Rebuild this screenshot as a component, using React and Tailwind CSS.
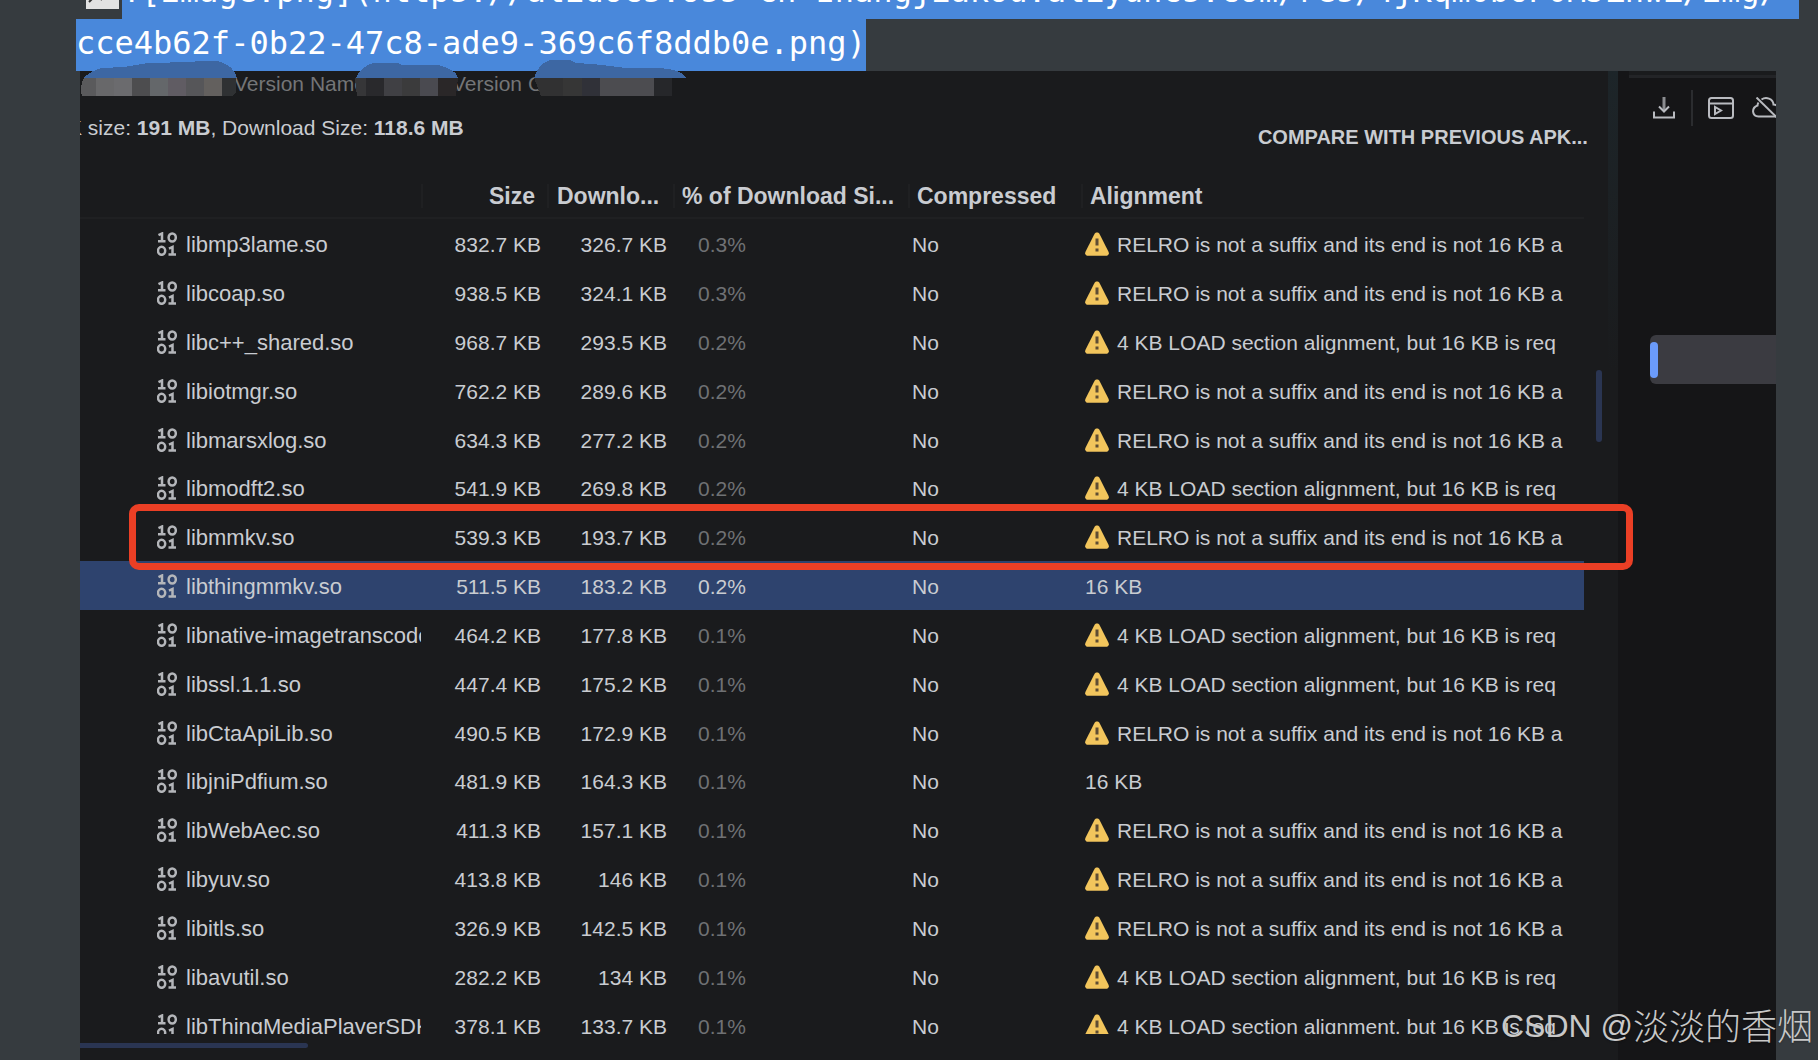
import React from 'react';

const RELRO = 'RELRO is not a suffix and its end is not 16 KB a';
const LOAD = '4 KB LOAD section alignment, but 16 KB is req';

const libs = [
    { name: 'libmp3lame.so', size: '832.7 KB', download: '326.7 KB', percent: '0.3%', warning: RELRO },
    { name: 'libcoap.so', size: '938.5 KB', download: '324.1 KB', percent: '0.3%', warning: RELRO },
    { name: 'libc++_shared.so', size: '968.7 KB', download: '293.5 KB', percent: '0.2%', warning: LOAD },
    { name: 'libiotmgr.so', size: '762.2 KB', download: '289.6 KB', percent: '0.2%', warning: RELRO },
    { name: 'libmarsxlog.so', size: '634.3 KB', download: '277.2 KB', percent: '0.2%', warning: RELRO },
    { name: 'libmodft2.so', size: '541.9 KB', download: '269.8 KB', percent: '0.2%', warning: LOAD },
    { name: 'libmmkv.so', size: '539.3 KB', download: '193.7 KB', percent: '0.2%', warning: RELRO },
    { name: 'libthingmmkv.so', size: '511.5 KB', download: '183.2 KB', percent: '0.2%', selected: true },
    { name: 'libnative-imagetranscode', size: '464.2 KB', download: '177.8 KB', percent: '0.1%', warning: LOAD },
    { name: 'libssl.1.1.so', size: '447.4 KB', download: '175.2 KB', percent: '0.1%', warning: LOAD },
    { name: 'libCtaApiLib.so', size: '490.5 KB', download: '172.9 KB', percent: '0.1%', warning: RELRO },
    { name: 'libjniPdfium.so', size: '481.9 KB', download: '164.3 KB', percent: '0.1%' },
    { name: 'libWebAec.so', size: '411.3 KB', download: '157.1 KB', percent: '0.1%', warning: RELRO },
    { name: 'libyuv.so', size: '413.8 KB', download: '146 KB', percent: '0.1%', warning: RELRO },
    { name: 'libitls.so', size: '326.9 KB', download: '142.5 KB', percent: '0.1%', warning: RELRO },
    { name: 'libavutil.so', size: '282.2 KB', download: '134 KB', percent: '0.1%', warning: LOAD },
    { name: 'libThingMediaPlayerSDK', size: '378.1 KB', download: '133.7 KB', percent: '0.1%', warning: LOAD },
];

const BinaryIcon = () => (
    <svg viewBox="0 0 20 24" className="w-5 h-6 mb-[2px] shrink-0" fill="none" stroke="#b4b6ba" strokeWidth="2.500">
        <path d="M1.500 3.200 5 1.500V10M1 9.300H8.500" />
        <ellipse cx="15.200" cy="5.500" rx="3.600" ry="4" />
        <ellipse cx="4.600" cy="18.800" rx="3.600" ry="4" />
        <path d="M12 16.700 15.500 15V23.500M11.500 22.600H19" />
    </svg>
);

const WarningIcon = () => (
    <svg viewBox="0 0 24 24" className="w-6 h-6 mb-[2px] shrink-0">
        <path d="M9.600 1.800C10.600 -0.100 13.400 -0.100 14.400 1.800L23.500 19.800C24.500 21.900 23.200 23.800 21 23.800H3C0.800 23.800 -0.500 21.900 0.500 19.800Z" fill="#f2c55c" />
        <path d="M10.500 6.500H13.500V13.500H10.500ZM10.500 16.500H13.500V19.500H10.500Z" fill="#5e4d33" />
    </svg>
);

const DownloadIcon = () => (
    <svg viewBox="0 0 22 22" className="w-[22px] h-[22px]" fill="none" stroke="#b9bbc0" strokeWidth="2">
        <path d="M11 0V14" stroke="#8b8c90" strokeWidth="3" />
        <path d="M6 9.500 11 14.500 16 9.500" />
        <path d="M1 14.500V20.500H21V14.500" />
    </svg>
);

const RunWindowIcon = () => (
    <svg viewBox="0 0 26 22" className="w-[26px] h-[22px]" fill="none" stroke="#b9bbc0" strokeWidth="2">
        <rect x="1" y="1" width="24" height="20" rx="2.500" />
        <path d="M1 6.500H25" />
        <path d="M7 10V17L13 13.500Z" />
    </svg>
);

const CloudOffIcon = () => (
    <svg viewBox="0 0 30 22" className="w-[30px] h-[22px]" fill="none" stroke="#b9bbc0" strokeWidth="2">
        <path d="M4.500 0.500 25 20.500" />
        <path d="M6.500 5.500C5.500 7 5.500 8 5.500 8.500C-1 11 0 19.500 6.500 19.500H24" />
        <path d="M9.500 2.500C14 -0.500 21 1.500 21.500 7.500C25 8 28.500 10.500 28 15" />
    </svg>
);

// pixelated smears hiding the package name and version values
const Smears = () => (
    <svg viewBox="0 0 610 40" className="absolute left-0 -top-[11px] w-[610px] h-10" shapeRendering="crispEdges">
        <g fill="#3d67a3">
            <path d="M4 18C8 13 14 10 22 8L44 7 68 3 112 2 118 1H138C148 4 156 10 157 18Z" />
            <path d="M276 18C279 10 287 4 294 3H318L322 5H358C370 8 377 12 378 18Z" />
            <path d="M454 18C456 9 464 0 474 -1H488L496 3 512 4 530 6 546 8H580C594 9 602 12 607 18Z" />
        </g>
        <path fill="#5a5a5c" d="M4 18H16V36H2C0 30 1 23 4 18Z" />
        <path fill="#68686a" d="M16 18H34V36H16Z" />
        <path fill="#6b6b6e" d="M34 18H52V36H34Z" />
        <path fill="#4d4d4f" d="M52 18H70V36H52Z" />
        <path fill="#64676a" d="M70 18H88V36H70Z" />
        <path fill="#605c63" d="M88 18H106V36H88Z" />
        <path fill="#565659" d="M106 18H124V36H106Z" />
        <path fill="#63605e" d="M124 18H142V36H124Z" />
        <path fill="#2f3133" d="M142 18H156V32L152 36H142Z" />
        <path fill="#363638" d="M275 18H286V36H277Z" />
        <path fill="#29292c" d="M286 18H304V36H286Z" />
        <path fill="#404044" d="M304 18H322V36H304Z" />
        <path fill="#3b3b3c" d="M322 18H340V36H322Z" />
        <path fill="#4a4a50" d="M340 18H358V36H340Z" />
        <path fill="#2a2728" d="M358 18H378L376 36H358Z" />
        <path fill="#313132" d="M454 18H483V36H461Z" />
        <path fill="#363636" d="M483 18H502V36H483Z" />
        <path fill="#303138" d="M502 18H520V36H502Z" />
        <path fill="#4c4c50" d="M520 18H574V36H520Z" />
        <path fill="#26272a" d="M574 18H592V36H574Z" />
    </svg>
);

const SelectedMarkdown = () => (
    <div className="h-[71px] shrink-0 overflow-hidden flex flex-col justify-end pl-[76px] font-['DejaVu_Sans_Mono',monospace] text-[32px] leading-[48px] text-white whitespace-pre">
        <div className="flex h-[52px] shrink-0">
            <span className="w-[46px] shrink-0 flex items-end pl-[10px] pb-[10px]">
                <svg viewBox="0 0 33 32" className="w-[33px] h-8 shrink-0">
                    <rect width="33" height="32" fill="#e2e2e2" />
                    <path d="M3 25 6 22M14 21 16 23" fill="none" stroke="#333" strokeWidth="2" />
                </svg>
            </span>
            <span className="grow mr-[19px] bg-[#4988db] overflow-hidden">![image.png](https://alidocs.oss-cn-zhangjiakou.aliyuncs.com/res/4jKqm0bOP0MJZnwZ/img/</span>
        </div>
        <div className="flex h-[52px] shrink-0">
            <span className="bg-[#4988db]">cce4b62f-0b22-47c8-ade9-369c6f8ddb0e.png)</span>
        </div>
    </div>
);

const HeaderCell = ({ children, divider = true, className = '' }) => (
    <th className="p-0 pt-[3px] font-bold text-[23px] border-b-2 border-[#1f2022]">
        <div className={`h-6 leading-6 whitespace-nowrap ${divider ? 'border-l-2 border-[#1f2022]' : ''} ${className}`}>{children}</div>
    </th>
);

const LibraryTable = () => (
    <table className="w-full h-[878px] table-fixed border-separate border-spacing-0 text-[21px] leading-6">
        <colgroup>
            <col className="w-[341px]" />
            <col className="w-[126px]" />
            <col className="w-[126px]" />
            <col className="w-[235px]" />
            <col className="w-[173px]" />
            <col />
        </colgroup>
        <thead>
            <tr className="h-12">
                <HeaderCell divider={false} />
                <HeaderCell className="text-right pr-3">Size</HeaderCell>
                <HeaderCell className="text-left pl-2">Downlo...</HeaderCell>
                <HeaderCell className="text-left pl-[7px]">% of Download Si...</HeaderCell>
                <HeaderCell className="text-left pl-[7px]">Compressed</HeaderCell>
                <HeaderCell className="text-left pl-[7px]">Alignment</HeaderCell>
            </tr>
        </thead>
        <tbody>
            {libs.map((lib) => (
                <tr key={lib.name} className={`h-12 whitespace-nowrap ${lib.selected ? 'bg-[#2e436e]' : ''}`}>
                    <td className="p-0 pt-1">
                        <div className="flex items-center pl-[77px] text-[22px] overflow-hidden">
                            <BinaryIcon />
                            <span className="ml-[9px]">{lib.name}</span>
                        </div>
                    </td>
                    <td className="p-0 pt-1 pr-[6px] text-right">{lib.size}</td>
                    <td className="p-0 pt-1 pr-[6px] text-right">{lib.download}</td>
                    <td className={`p-0 pt-1 pl-[25px] ${lib.selected ? '' : 'text-[#6f7174]'}`}>{lib.percent}</td>
                    <td className="p-0 pt-1 pl-1">No</td>
                    <td className="p-0 pt-1 pl-1">
                        {lib.warning ? (
                            <div className="flex items-center gap-2 mr-5 overflow-hidden">
                                <WarningIcon />
                                <span>{lib.warning}</span>
                            </div>
                        ) : (
                            '16 KB'
                        )}
                    </td>
                </tr>
            ))}
        </tbody>
    </table>
);

const App = () => {
    return (
        <div className="relative h-screen overflow-hidden flex flex-col bg-[#363b3f] font-['Liberation_Sans',Arial,sans-serif]">
            <SelectedMarkdown />

            <div className="relative grow min-h-0 flex ml-20 mr-[42px] bg-[#1a1b1d] text-[#c9ccd1]">
                <Smears />

                {/* APK analyzer */}
                <div className="grow min-w-0 flex flex-col">
                    <div className="h-[100px] shrink-0 flex justify-between overflow-hidden whitespace-nowrap text-[21px] leading-[26px]">
                        <div>
                            <div className="flex pl-[154px] text-[#747577]">
                                <span className="w-[218px]">Version Name:</span>
                                <span>Version Code:</span>
                            </div>
                            <p className="mt-[18px] -ml-3">
                                K size: <b>191 MB</b>, Download Size: <b>118.6 MB</b>
                            </p>
                        </div>
                        <button className="self-start mt-[53px] mr-5 text-xl leading-[26px] font-bold">COMPARE WITH PREVIOUS APK...</button>
                    </div>

                    <div className="grow min-h-0 flex">
                        <div className="grow min-w-0 overflow-hidden">
                            <LibraryTable />
                        </div>
                        <div className="w-6 shrink-0 pl-3 pt-[199px]">
                            <div className="w-[6px] h-[72px] rounded-full bg-[#2a3552]" />
                        </div>
                    </div>
                    <div className="h-[26px] shrink-0 pt-[9px]">
                        <div className="w-[228px] h-[5px] rounded-r-full bg-[#2a3552]" />
                    </div>
                </div>

                <div className="w-[10px] shrink-0">
                    <div className="h-[300px] bg-linear-to-b from-[#1d2529] to-[#1a1b1d]" />
                </div>

                {/* Device panel */}
                <div className="w-[158px] shrink-0 bg-[#151517] overflow-hidden">
                    <div className="h-[7px] ml-[11px] bg-[#1a1b1d] border-b-3 border-[#232427]" />
                    <div className="h-[60px] flex items-center pl-[35px]">
                        <button aria-label="Download" className="shrink-0"><DownloadIcon /></button>
                        <span className="w-[2px] h-9 shrink-0 ml-4 mr-[15px] bg-[#2b2c2f]" />
                        <button aria-label="Run in window" className="shrink-0"><RunWindowIcon /></button>
                        <button aria-label="Offline" className="shrink-0 ml-[18px]"><CloudOffIcon /></button>
                    </div>
                    <div className="mt-[197px] ml-8 h-[49px] flex items-center rounded-l-md bg-[#3b3b41]">
                        <span className="w-2 h-9 rounded-full bg-[#6b9bfa]" />
                    </div>
                </div>

                {/* hand drawn marker round libmmkv.so */}
                <div className="absolute top-[433px] left-[49px] right-[143px] h-[66px] border-7 border-[#eb3f25] rounded-[10px]" />
            </div>

            <div className="absolute right-[5px] bottom-2 flex items-center leading-[52px] whitespace-pre text-[#c8c8c8] text-shadow-sm">
                <span className="text-[32px]">CSDN @</span>
                <span className="pb-1 text-4xl leading-[48px] font-['Noto_Sans_CJK_SC',sans-serif] font-light">淡淡的香烟</span>
            </div>
        </div>
    );
};

export default App;
